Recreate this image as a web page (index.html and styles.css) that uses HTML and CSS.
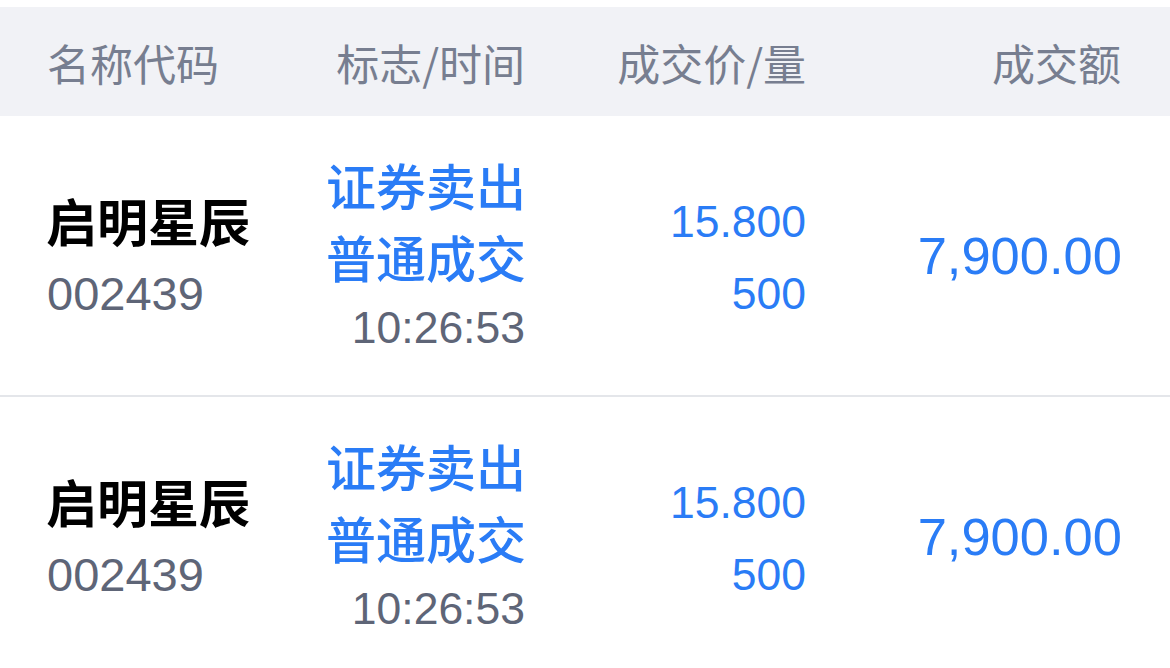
FILE: index.html
```html
<!DOCTYPE html>
<html lang="zh-CN">
<head>
<meta charset="utf-8">
<title>成交</title>
<link rel="stylesheet" href="styles.css">
</head>
<body>
<div class="page">
  <div class="head grid">
    <div class="h h-left">名称代码</div>
    <div class="h">标志/时间</div>
    <div class="h">成交价/量</div>
    <div class="h">成交额</div>
  </div>
  <div class="row grid">
    <div class="cell c-name">
      <div class="name">启明星辰</div>
      <div class="code num">002439</div>
    </div>
    <div class="cell c-flag">
      <div class="flag">证券卖出</div>
      <div class="flag">普通成交</div>
      <div class="time num">10:26:53</div>
    </div>
    <div class="cell c-price">
      <div class="price num">15.800</div>
      <div class="price num">500</div>
    </div>
    <div class="cell c-amt">
      <div class="amt num">7,900.00</div>
    </div>
  </div>
  <div class="row grid">
    <div class="cell c-name">
      <div class="name">启明星辰</div>
      <div class="code num">002439</div>
    </div>
    <div class="cell c-flag">
      <div class="flag">证券卖出</div>
      <div class="flag">普通成交</div>
      <div class="time num">10:26:53</div>
    </div>
    <div class="cell c-price">
      <div class="price num">15.800</div>
      <div class="price num">500</div>
    </div>
    <div class="cell c-amt">
      <div class="amt num">7,900.00</div>
    </div>
  </div>
</div>
</body>
</html>
```

FILE: styles.css
```css
html, body {
  margin: 0;
  padding: 0;
  background: #ffffff;
}
body {
  font-family: "Noto Sans CJK SC", "Noto Sans", sans-serif;
  overflow: hidden;
}
.page {
  padding-top: 7px;
}
.grid {
  display: grid;
  grid-template-columns: 252px 225px 281px 1fr;
  padding: 0 49px 0 48px;
  align-items: center;
}
.head {
  background: #f1f2f6;
  height: 109px;
}
.h {
  font-size: 43px;
  line-height: 50px;
  color: #777e90;
  text-align: right;
  white-space: nowrap;
}
.h-left {
  text-align: left;
  margin-left: -1px;
}
.h-slash {
  letter-spacing: 0;
}
.row {
  height: 279px;
  border-bottom: 2px solid #e4e6ea;
}
.cell {
  display: flex;
  flex-direction: column;
  white-space: nowrap;
}
.c-name {
  align-items: flex-start;
}
.c-flag, .c-price, .c-amt {
  align-items: flex-end;
}
.num {
  font-family: "Liberation Sans", Arial, sans-serif;
}
.name {
  font-size: 51px;
  font-weight: 700;
  color: #000000;
  line-height: 74px;
  margin-top: 2px;
  margin-left: -2px;
}
.code {
  font-size: 47px;
  color: #5e6577;
  line-height: 74px;
  margin-left: -1px;
}
.flag {
  font-size: 50px;
  font-weight: 500;
  color: #2a7cf6;
  line-height: 72px;
  margin-right: -1px;
}
.time {
  font-size: 44.5px;
  color: #5e6577;
  line-height: 72px;
}
.price {
  font-size: 44.5px;
  color: #2a7cf6;
  line-height: 72px;
  position: relative;
  top: 2px;
}
.amt {
  font-size: 52.5px;
  color: #2a7cf6;
  line-height: 72px;
  margin-right: -1px;
}
```
